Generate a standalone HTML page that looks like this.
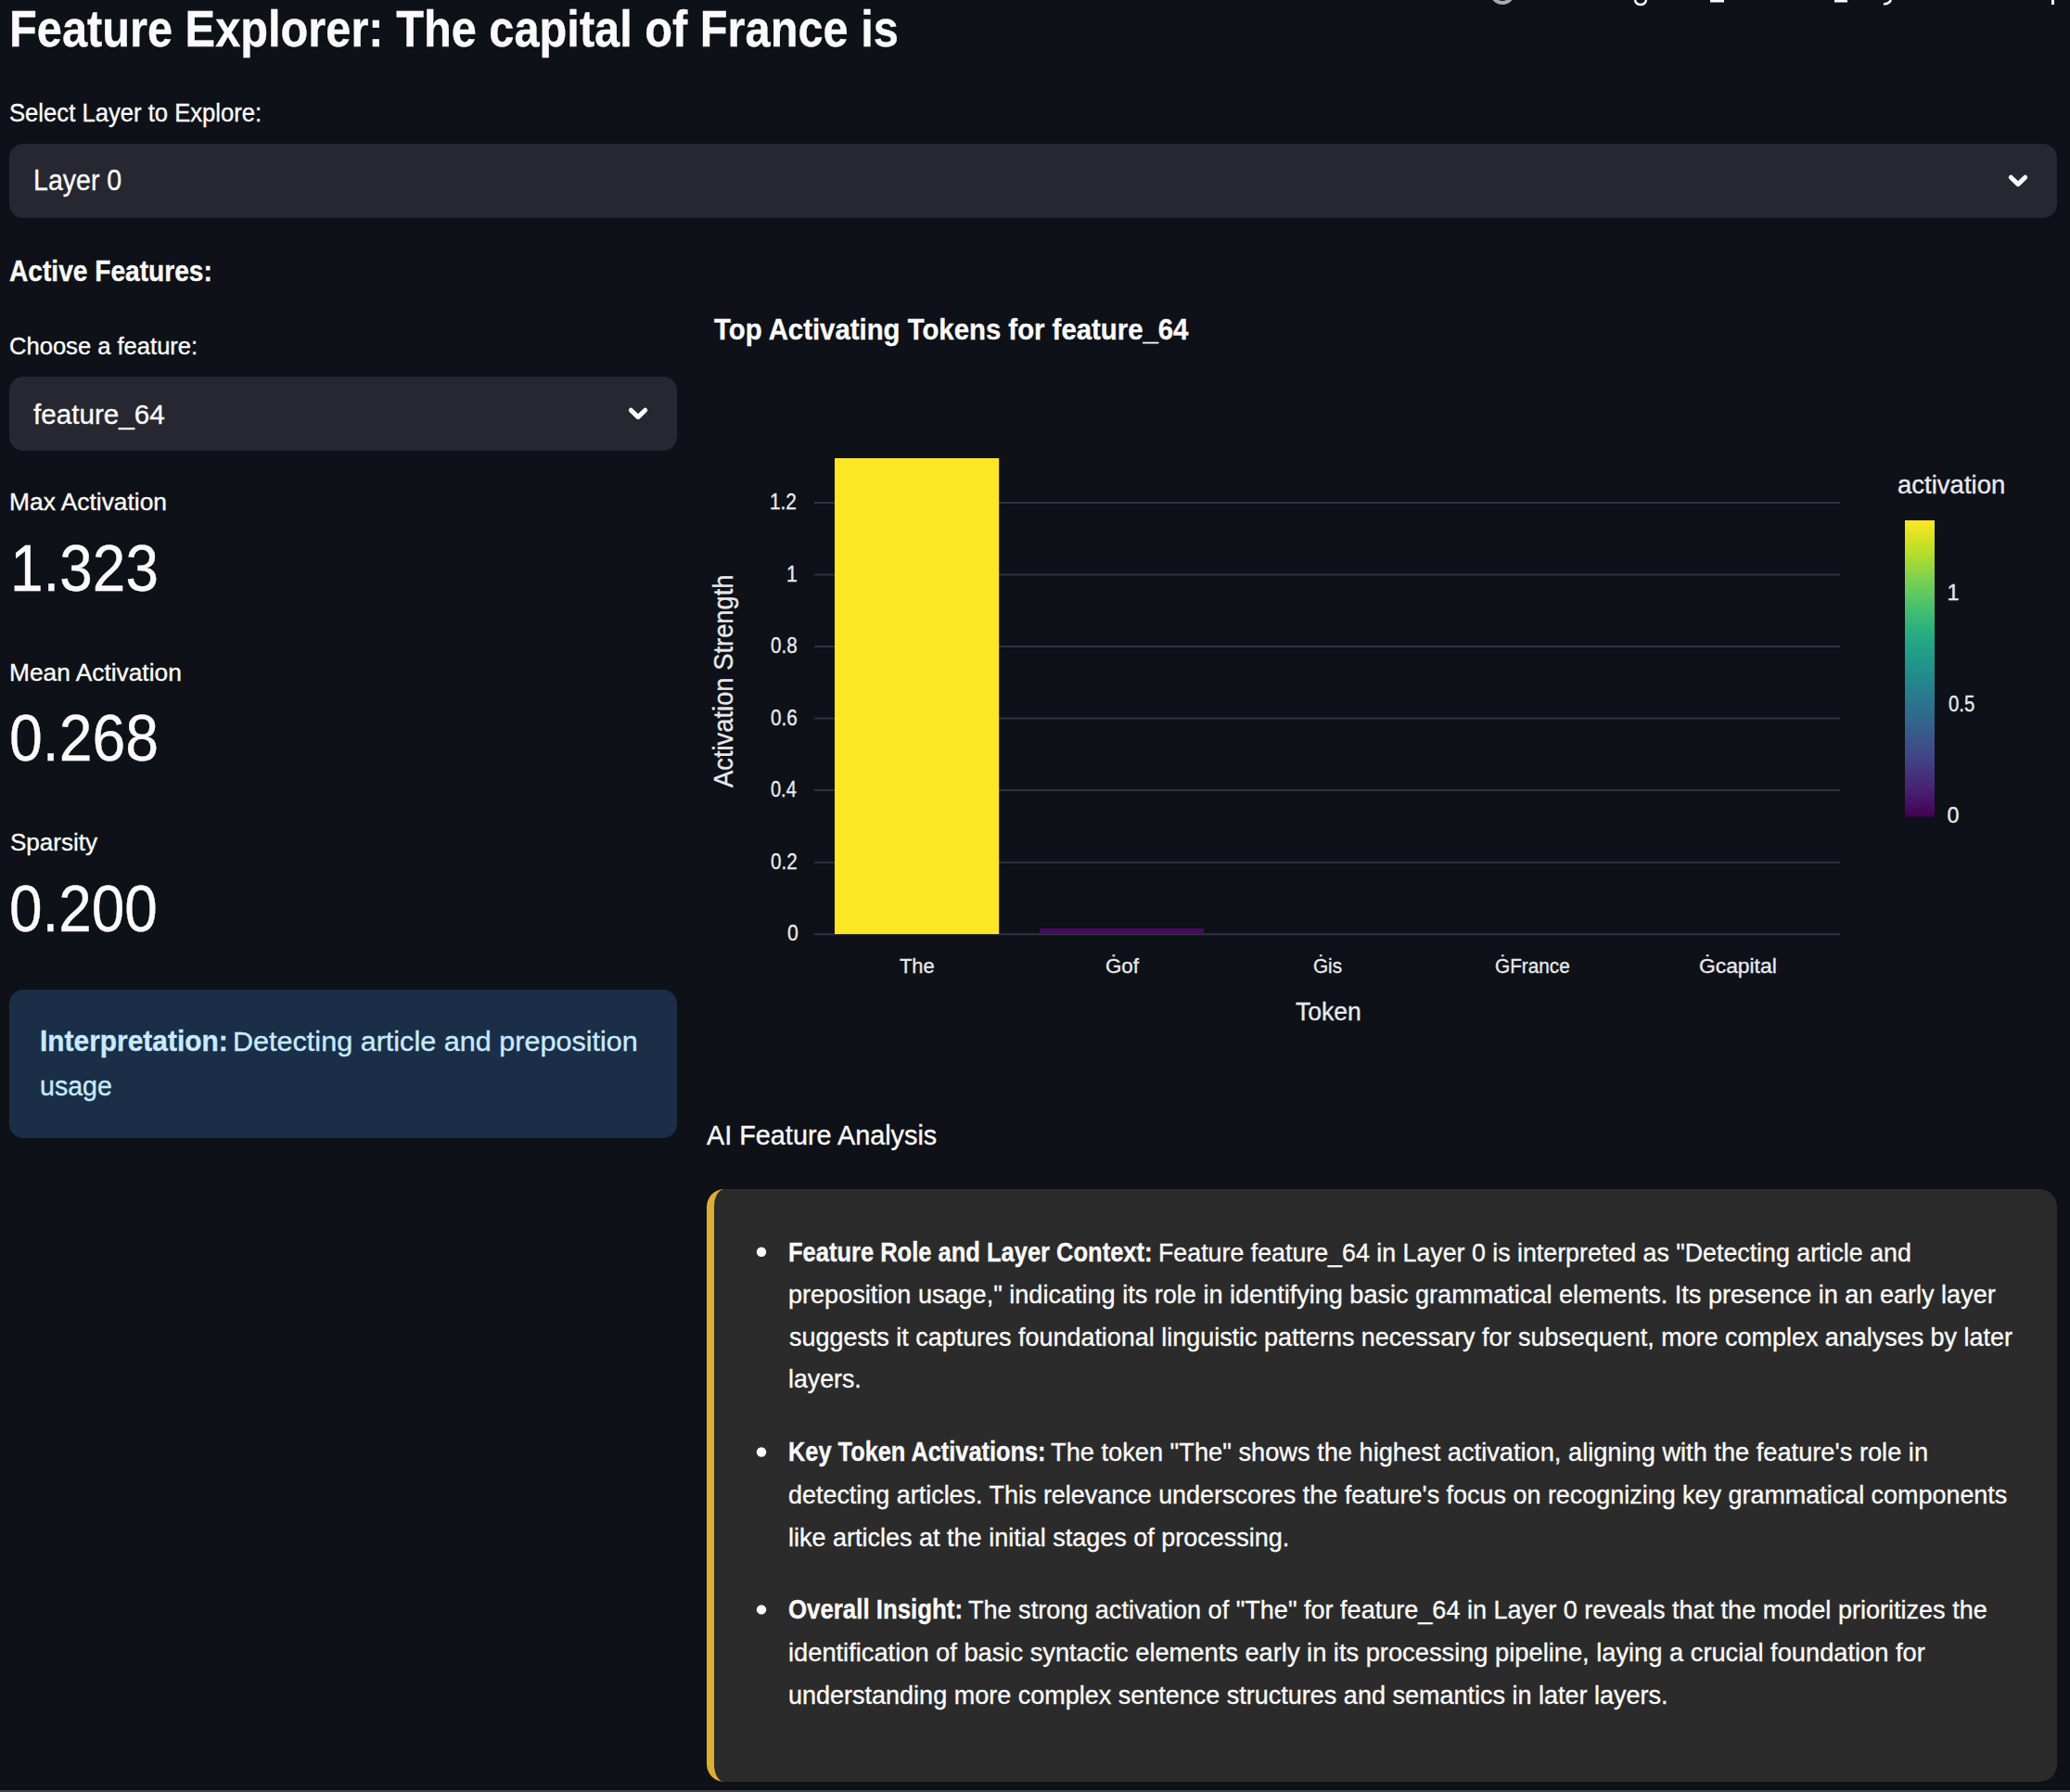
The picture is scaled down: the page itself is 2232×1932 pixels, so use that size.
<!DOCTYPE html>
<html><head><meta charset="utf-8">
<style>
html,body{margin:0;padding:0}
body{background:#0e1117;width:2232px;height:1932px;overflow:hidden;position:relative;font-family:"Liberation Sans",sans-serif}
.t{position:absolute;white-space:nowrap;line-height:1;transform-origin:0 0}
.t b{font-weight:700}
.t{-webkit-text-stroke:0.35px currentColor}
.box{position:absolute}
</style></head><body>
<!-- top status (clipped) -->
<svg class="box" style="left:0;top:0" width="2232" height="12">
 <circle cx="1620" cy="-8.5" r="11.5" fill="none" stroke="#a9abb3" stroke-width="4"/>
 <path d="M1763 0 Q1764 5 1769 5 Q1774 5 1775 0" fill="none" stroke="#fafafa" stroke-width="2.5"/>
 <rect x="1844" y="0" width="15" height="2.5" fill="#fafafa"/>
 <rect x="1978" y="0" width="14" height="2.5" fill="#fafafa"/>
 <path d="M2031 4 Q2036 5 2039 0" fill="none" stroke="#fafafa" stroke-width="2.5"/>
 <rect x="2212" y="0" width="3" height="5" fill="#fafafa"/>
</svg>
<!-- layer select -->
<div class="box" style="left:10px;top:155px;width:2208px;height:80px;border-radius:15px;background:#262730"></div>
<svg class="box" style="left:2160px;top:180px" width="32" height="30"><path d="M8.3 11.2 L16 18.6 L23.7 11.2" fill="none" stroke="#fafafa" stroke-width="5" stroke-linecap="round" stroke-linejoin="round"/></svg>
<!-- feature select -->
<div class="box" style="left:10px;top:406px;width:720px;height:80px;border-radius:15px;background:#262730"></div>
<svg class="box" style="left:672px;top:431px" width="32" height="30"><path d="M8.3 11.2 L16 18.6 L23.7 11.2" fill="none" stroke="#fafafa" stroke-width="5" stroke-linecap="round" stroke-linejoin="round"/></svg>
<!-- interpretation box -->
<div class="box" style="left:10px;top:1067px;width:720px;height:160px;border-radius:15px;background:#1b2e48"></div>
<!-- chart -->
<svg class="box" style="left:0;top:0" width="2232" height="1100">
 <defs>
  <linearGradient id="vir" x1="0" y1="1" x2="0" y2="0">
   <stop offset="0" stop-color="#440154"/>
   <stop offset="0.1" stop-color="#482475"/>
   <stop offset="0.2" stop-color="#414487"/>
   <stop offset="0.3" stop-color="#355f8d"/>
   <stop offset="0.4" stop-color="#2a788e"/>
   <stop offset="0.5" stop-color="#21918c"/>
   <stop offset="0.6" stop-color="#22a884"/>
   <stop offset="0.7" stop-color="#44bf70"/>
   <stop offset="0.8" stop-color="#7ad151"/>
   <stop offset="0.9" stop-color="#bddf26"/>
   <stop offset="1" stop-color="#fde725"/>
  </linearGradient>
 </defs>
 <g stroke="#31333d" stroke-width="2">
  <line x1="878" x2="1984" y1="541.9" y2="541.9"/>
  <line x1="878" x2="1984" y1="619.5" y2="619.5"/>
  <line x1="878" x2="1984" y1="697.0" y2="697.0"/>
  <line x1="878" x2="1984" y1="774.6" y2="774.6"/>
  <line x1="878" x2="1984" y1="852.1" y2="852.1"/>
  <line x1="878" x2="1984" y1="929.7" y2="929.7"/>
  <line x1="878" x2="1984" y1="1007.2" y2="1007.2"/>
 </g>
 <rect x="900" y="494" width="177.2" height="513" fill="#fde725"/>
 <rect x="1121.2" y="1001" width="177.1" height="6" fill="#460b5e"/>
 <rect x="2054" y="561" width="32" height="319.5" fill="url(#vir)"/>
</svg>
<div class="t" id="ytitle" style="left:765px;top:849px;font-size:29.65px;color:#e8e9ed;transform-origin:0 0;transform:rotate(-90deg) scaleX(0.9228)">Activation Strength</div>
<!-- analysis box -->
<div class="box" style="left:762px;top:1282px;width:1448px;height:639px;border-radius:19px;background:#2b2b2b;border-left:8px solid #dcae36"></div>
<svg class="box" style="left:800px;top:1330px" width="40" height="420">
 <circle cx="21" cy="19.7" r="5.2" fill="#fafafa"/>
 <circle cx="21" cy="235.5" r="5.2" fill="#fafafa"/>
 <circle cx="21" cy="405.4" r="5.2" fill="#fafafa"/>
</svg>
<div class="box" style="left:0;top:1930px;width:2232px;height:2px;background:#3e4245"></div>
<div class="t" id="title" style="left:10.37px;top:4.01px;font-size:55.52px;font-weight:700;color:#fafafa;transform:scaleX(0.8780)">Feature Explorer: The capital of France is</div>
<div class="t" id="lbl_layer" style="left:10.05px;top:107.99px;font-size:27.07px;font-weight:400;color:#fafafa;transform:scaleX(0.9474)">Select Layer to Explore:</div>
<div class="t" id="sel_layer" style="left:35.66px;top:180.09px;font-size:30.84px;font-weight:400;color:#fafafa;transform:scaleX(0.9262)">Layer 0</div>
<div class="t" id="active" style="left:9.56px;top:275.82px;font-size:31.98px;font-weight:700;color:#fafafa;transform:scaleX(0.8797)">Active Features:</div>
<div class="t" id="lbl_feat" style="left:9.52px;top:359.82px;font-size:26.09px;font-weight:400;color:#fafafa;transform:scaleX(0.9801)">Choose a feature:</div>
<div class="t" id="sel_feat" style="left:36.00px;top:431.60px;font-size:29.76px;font-weight:400;color:#fafafa;transform:scaleX(0.9962)">feature_64</div>
<div class="t" id="m1l" style="left:10.02px;top:528.48px;font-size:26.37px;font-weight:400;color:#fafafa;transform:scaleX(1.0004)">Max Activation</div>
<div class="t" id="m1v" style="left:10.88px;top:578.70px;font-size:69.77px;font-weight:400;color:#fafafa;transform:scaleX(0.9163)">1.323</div>
<div class="t" id="m2l" style="left:10.02px;top:711.50px;font-size:26.23px;font-weight:400;color:#fafafa;transform:scaleX(1.0037)">Mean Activation</div>
<div class="t" id="m2v" style="left:10.18px;top:761.87px;font-size:69.91px;font-weight:400;color:#fafafa;transform:scaleX(0.9212)">0.268</div>
<div class="t" id="m3l" style="left:10.53px;top:894.90px;font-size:26.23px;font-weight:400;color:#fafafa;transform:scaleX(0.9930)">Sparsity</div>
<div class="t" id="m3v" style="left:10.21px;top:944.93px;font-size:70.20px;font-weight:400;color:#fafafa;transform:scaleX(0.9100)">0.200</div>
<div class="t" id="int1a" style="left:42.80px;top:1107.12px;font-size:31.50px;font-weight:700;color:#c7ebff;transform:scaleX(0.9496)">Interpretation:</div>
<div class="t" id="int1b" style="left:251.49px;top:1108.20px;font-size:30.24px;font-weight:400;color:#c7ebff;transform:scaleX(1.0112)">Detecting article and preposition</div>
<div class="t" id="int2" style="left:42.57px;top:1156.20px;font-size:30.24px;font-weight:400;color:#c7ebff;transform:scaleX(0.9450)">usage</div>
<div class="t" id="ctitle" style="left:770.49px;top:340.29px;font-size:31.54px;font-weight:700;color:#fafafa;transform:scaleX(0.9306)">Top Activating Tokens for feature_64</div>
<div class="t" id="yt12" style="left:830.15px;top:530.23px;font-size:23.26px;font-weight:400;color:#e8e9ed;transform:scaleX(0.8952)">1.2</div>
<div class="t" id="xt1" style="left:970.02px;top:1029.85px;font-size:22.88px;font-weight:400;color:#e8e9ed;transform:scaleX(0.9554)">The</div>
<div class="t" id="xt2" style="left:1191.56px;top:1029.88px;font-size:22.85px;font-weight:400;color:#e8e9ed;transform:scaleX(0.9766)">Ġof</div>
<div class="t" id="xt3" style="left:1416.13px;top:1029.88px;font-size:22.85px;font-weight:400;color:#e8e9ed;transform:scaleX(0.9072)">Ġis</div>
<div class="t" id="xt4" style="left:1612.14px;top:1029.88px;font-size:22.85px;font-weight:400;color:#e8e9ed;transform:scaleX(0.9086)">ĠFrance</div>
<div class="t" id="xt5" style="left:1831.52px;top:1029.88px;font-size:22.85px;font-weight:400;color:#e8e9ed;transform:scaleX(0.9991)">Ġcapital</div>
<div class="t" id="xtitle" style="left:1396.51px;top:1076.99px;font-size:27.07px;font-weight:400;color:#e8e9ed;transform:scaleX(0.9801)">Token</div>
<div class="t" id="cbtitle" style="left:2045.96px;top:510.15px;font-size:26.88px;font-weight:400;color:#e8e9ed;transform:scaleX(1.0240)">activation</div>
<div class="t" id="cb1" style="left:2099.50px;top:627.60px;font-size:23.30px;font-weight:400;color:#e8e9ed;transform:scaleX(1.0000)">1</div>
<div class="t" id="cb05" style="left:2100.59px;top:748.20px;font-size:23.30px;font-weight:400;color:#e8e9ed;transform:scaleX(0.8740)">0.5</div>
<div class="t" id="cb0" style="left:2099.50px;top:868.20px;font-size:23.30px;font-weight:400;color:#e8e9ed;transform:scaleX(1.0000)">0</div>
<div class="t" id="aih" style="left:762.00px;top:1209.28px;font-size:30.14px;font-weight:400;color:#fafafa;transform:scaleX(0.9564)">AI Feature Analysis</div>
<div class="t" id="b1l1a" style="left:850.41px;top:1335.52px;font-size:28.80px;font-weight:700;color:#fafafa;transform:scaleX(0.8855)">Feature Role and Layer Context:</div>
<div class="t" id="b1l1b" style="left:1248.58px;top:1336.50px;font-size:27.65px;font-weight:400;color:#fafafa;transform:scaleX(0.9688)">Feature feature_64 in Layer 0 is interpreted as "Detecting article and</div>
<div class="t" id="b1l2" style="left:850.05px;top:1382.10px;font-size:27.65px;font-weight:400;color:#fafafa;transform:scaleX(0.9791)">preposition usage," indicating its role in identifying basic grammatical elements. Its presence in an early layer</div>
<div class="t" id="b1l3" style="left:851.07px;top:1427.70px;font-size:27.65px;font-weight:400;color:#fafafa;transform:scaleX(0.9744)">suggests it captures foundational linguistic patterns necessary for subsequent, more complex analyses by later</div>
<div class="t" id="b1l4" style="left:850.06px;top:1473.40px;font-size:27.65px;font-weight:400;color:#fafafa;transform:scaleX(0.9669)">layers.</div>
<div class="t" id="b2l1a" style="left:850.42px;top:1551.32px;font-size:28.80px;font-weight:700;color:#fafafa;transform:scaleX(0.8804)">Key Token Activations:</div>
<div class="t" id="b2l1b" style="left:1132.97px;top:1552.30px;font-size:27.65px;font-weight:400;color:#fafafa;transform:scaleX(0.9848)">The token "The" shows the highest activation, aligning with the feature's role in</div>
<div class="t" id="b2l2" style="left:850.03px;top:1597.90px;font-size:27.65px;font-weight:400;color:#fafafa;transform:scaleX(0.9742)">detecting articles. This relevance underscores the feature's focus on recognizing key grammatical components</div>
<div class="t" id="b2l3" style="left:850.05px;top:1643.80px;font-size:27.65px;font-weight:400;color:#fafafa;transform:scaleX(0.9770)">like articles at the initial stages of processing.</div>
<div class="t" id="b3l1a" style="left:850.26px;top:1721.22px;font-size:28.80px;font-weight:700;color:#fafafa;transform:scaleX(0.8968)">Overall Insight:</div>
<div class="t" id="b3l1b" style="left:1044.08px;top:1722.20px;font-size:27.65px;font-weight:400;color:#fafafa;transform:scaleX(0.9786)">The strong activation of "The" for feature_64 in Layer 0 reveals that the model prioritizes the</div>
<div class="t" id="b3l2" style="left:850.07px;top:1767.70px;font-size:27.65px;font-weight:400;color:#fafafa;transform:scaleX(0.9862)">identification of basic syntactic elements early in its processing pipeline, laying a crucial foundation for</div>
<div class="t" id="b3l3" style="left:850.05px;top:1814.20px;font-size:27.65px;font-weight:400;color:#fafafa;transform:scaleX(0.9769)">understanding more complex sentence structures and semantics in later layers.</div>
<div class="t" id="yt1" style="left:847.55px;top:607.64px;font-size:23.30px;font-weight:400;color:#e8e9ed;transform:scaleX(0.9100)">1</div>
<div class="t" id="yt08" style="left:831.17px;top:685.19px;font-size:23.30px;font-weight:400;color:#e8e9ed;transform:scaleX(0.8855)">0.8</div>
<div class="t" id="yt06" style="left:831.17px;top:762.75px;font-size:23.30px;font-weight:400;color:#e8e9ed;transform:scaleX(0.8855)">0.6</div>
<div class="t" id="yt04" style="left:831.18px;top:840.29px;font-size:23.30px;font-weight:400;color:#e8e9ed;transform:scaleX(0.8578)">0.4</div>
<div class="t" id="yt02" style="left:831.14px;top:917.85px;font-size:23.30px;font-weight:400;color:#e8e9ed;transform:scaleX(0.8855)">0.2</div>
<div class="t" id="yt0" style="left:848.60px;top:995.39px;font-size:23.30px;font-weight:400;color:#e8e9ed;transform:scaleX(0.9100)">0</div>
</body></html>
